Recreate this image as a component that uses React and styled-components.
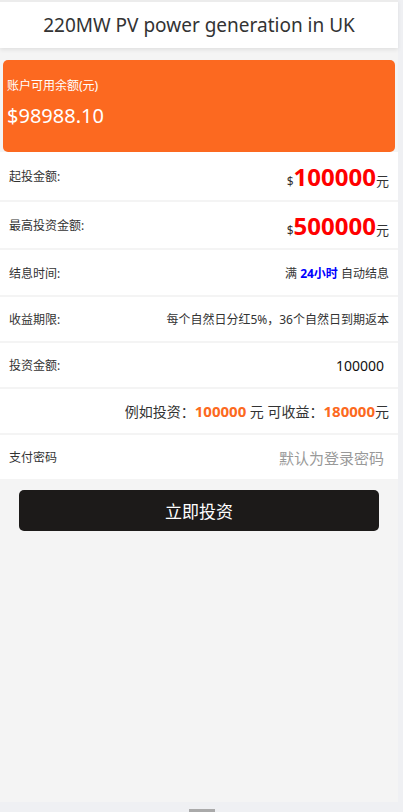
import React from "react";
import styled, { createGlobalStyle } from "styled-components";

const GlobalStyle = createGlobalStyle`
  html, body {
    margin: 0;
    padding: 0;
    background: #eff0f3;
  }
  body {
    font-family: "Noto Sans", "Noto Sans CJK SC", sans-serif;
    color: #333;
  }
`;

const orange = "#fc6920";

const Page = styled.div`
  width: 398px;
  min-height: 802px;
  background: #f4f4f4;
  display: flex;
  flex-direction: column;
`;

const Header = styled.header`
  height: 46px;
  border-top: 2px solid #ececec;
  background: #fff;
  box-shadow: 0 2px 4px rgba(0, 0, 0, 0.08);
  display: flex;
  align-items: center;
  justify-content: center;
  font-size: 19px;
  color: #333;
`;

const BalanceCard = styled.section`
  margin: 12px 3px 0;
  height: 92px;
  box-sizing: border-box;
  background: ${orange};
  border-radius: 5px;
  color: #fff;
  padding: 0 4px 8px;
  display: flex;
  flex-direction: column;
  justify-content: center;
  gap: 8px;
`;

const BalanceLabel = styled.div`
  font-size: 12px;
`;

const BalanceAmount = styled.div`
  font-size: 20px;
`;

const List = styled.div`
  display: flex;
  flex-direction: column;
  gap: 2px;
`;

const Row = styled.div`
  background: #fff;
  height: ${(p) => p.$h || 44}px;
  padding: 0 9px;
  display: flex;
  align-items: center;
  justify-content: space-between;
  font-size: 12px;
  color: #333;
`;

const Label = styled.span`
  font-size: 12px;
`;

const Value = styled.span`
  margin-left: auto;
  font-size: ${(p) => p.$size || 12}px;
  color: ${(p) => p.$color || "#333"};
  padding-right: ${(p) => p.$pr || 0}px;
  white-space: nowrap;
`;

const Big = styled.span`
  font-size: 24px;
  font-weight: bold;
  color: #f00;
`;

const Small = styled.span`
  font-size: 12px;
`;

const Strong = styled.span`
  font-weight: bold;
  font-size: ${(p) => p.$size || "inherit"};
  color: ${(p) => p.$color};
`;

const PayButton = styled.button`
  margin: 11px 19px 0;
  height: 41px;
  border: none;
  border-radius: 5px;
  background: #1c1a19;
  color: #fff;
  font-family: inherit;
  font-size: 17px;
`;

const Bottom = styled.div`
  width: 403px;
  height: 10px;
  display: flex;
  justify-content: center;
  align-items: flex-end;
`;

const Handle = styled.div`
  width: 26px;
  height: 3px;
  background: #aaa;
`;

export default function App() {
  return (
    <>
      <GlobalStyle />
      <Page>
        <Header>220MW PV power generation in UK</Header>
        <BalanceCard>
          <BalanceLabel>账户可用余额(元)</BalanceLabel>
          <BalanceAmount>$98988.10</BalanceAmount>
        </BalanceCard>
        <List>
          <Row $h={48}>
            <Label>起投金额:</Label>
            <Value $size={13}>
              <Small>$</Small>
              <Big>100000</Big>元
            </Value>
          </Row>
          <Row $h={46}>
            <Label>最高投资金额:</Label>
            <Value $size={13}>
              <Small>$</Small>
              <Big>500000</Big>元
            </Value>
          </Row>
          <Row $h={45}>
            <Label>结息时间:</Label>
            <Value>
              满 <Strong $color="#00f">24小时</Strong> 自动结息
            </Value>
          </Row>
          <Row>
            <Label>收益期限:</Label>
            <Value>每个自然日分红5%，36个自然日到期返本</Value>
          </Row>
          <Row>
            <Label>投资金额:</Label>
            <Value $size={14} $color="#111" $pr={5}>100000</Value>
          </Row>
          <Row>
            <Value $size={14}>
              例如投资：<Strong $color={orange} $size="15px">100000</Strong> 元 可收益：
              <Strong $color={orange} $size="15px">180000</Strong>元
            </Value>
          </Row>
          <Row>
            <Label>支付密码</Label>
            <Value $size={15} $color="#999" $pr={5}>默认为登录密码</Value>
          </Row>
        </List>
        <PayButton>立即投资</PayButton>
      </Page>
      <Bottom>
        <Handle />
      </Bottom>
    </>
  );
}
